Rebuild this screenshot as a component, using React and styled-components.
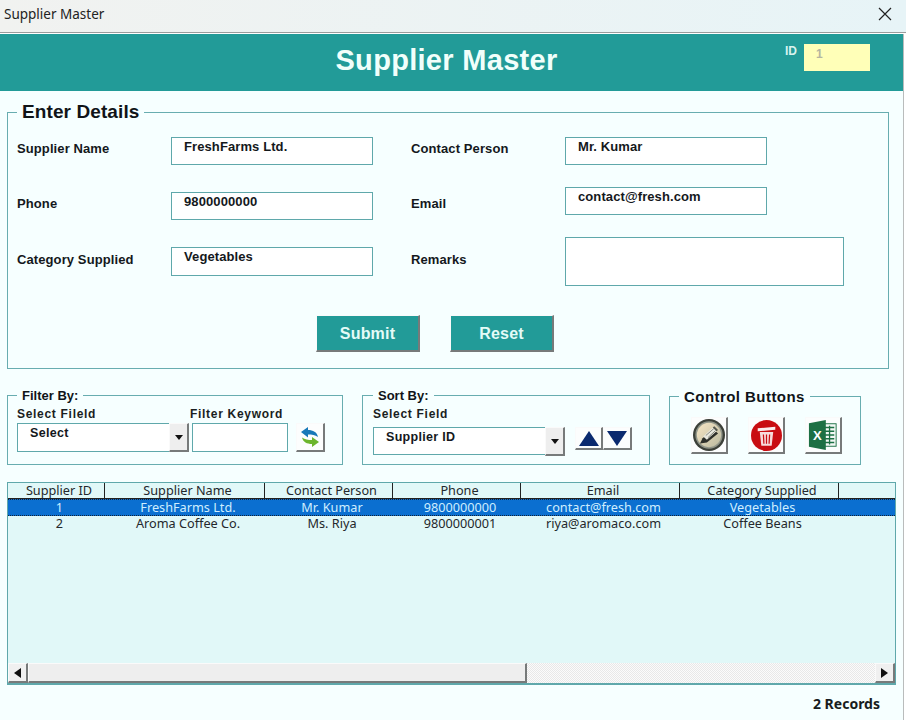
import React from "react";
import styled, { createGlobalStyle, css } from "styled-components";

const GlobalStyle = createGlobalStyle`
  html, body {
    margin: 0;
    background: #ffffff;
  }
  * {
    box-sizing: border-box;
  }
`;

const ui = `"Liberation Sans", Arial, sans-serif`;
const grid = `"Noto Sans", "Open Sans", sans-serif`;

const bevel = css`
  border-style: solid;
  border-width: 1px 2px 2px 1px;
  border-color: #fafafa #777a7a #777a7a #fafafa;
`;

const Page = styled.div`
  width: 906px;
  height: 720px;
  overflow: hidden;
`;

const TitleBar = styled.div`
  height: 33px;
  padding: 0 14px 5px 4px;
  display: flex;
  align-items: center;
  justify-content: space-between;
  background: linear-gradient(90deg, #f1f2f0, #e7f4f7);
  border-bottom: 1px solid #9a9c9c;
  font: 13.5px ${grid};
  color: #222;
`;

const Main = styled.div`
  width: 904px;
  height: 687px;
  background: #f6ffff;
  border-right: 1px solid #b9bcbc;
`;

const Banner = styled.div`
  height: 57px;
  margin-top: 1px;
  width: 903px;
  background: #229b98;
  display: grid;
  grid-template-columns: 1fr auto 1fr;
  align-items: center;
`;

const BannerTitle = styled.h1`
  grid-column: 2;
  margin: 0 10px 4px 0;
  font: bold 29px ${ui};
  letter-spacing: 0.3px;
  color: #f1fffb;
`;

const IdBox = styled.div`
  justify-self: end;
  align-self: start;
  margin: 10px 33px 0 0;
  display: flex;
  gap: 7px;
`;

const IdLabel = styled.span`
  font: bold 12px ${ui};
  color: #d8f3ef;
`;

const IdValue = styled.div`
  width: 66px;
  height: 27px;
  padding: 3px 12px;
  background: #ffffb8;
  font: bold 12px ${ui};
  color: #b5b5a0;
`;

const Box = styled.fieldset`
  margin: 0;
  padding: 0;
  min-width: 0;
  width: ${(p) => p.$w}px;
  height: ${(p) => p.$h}px;
  border: 1px solid #68adb0;
`;

const BoxTitle = styled.legend`
  margin-left: ${(p) => p.$left || 9}px;
  padding: 0 5px;
  font: bold ${(p) => p.$size || 13}px ${ui};
  letter-spacing: ${(p) => p.$spacing || 0}px;
  color: #101418;
`;

const DetailsBox = styled(Box)`
  margin: 10px 0 0 7px;
`;

const FormGrid = styled.div`
  display: grid;
  grid-template-columns: 154px 240px 154px 1fr;
  grid-template-rows: 50px 50px auto;
  padding: 14px 0 0 9px;
`;

const FieldLabel = styled.label`
  margin-top: ${(p) => p.$top}px;
  font: bold 13px ${ui};
  letter-spacing: 0.1px;
  color: #14181c;
`;

const TextField = styled.div`
  width: ${(p) => p.$w || 202}px;
  height: ${(p) => p.$h || 28}px;
  margin-top: ${(p) => p.$top || 0}px;
  padding: 1px 12px;
  background: #ffffff;
  border: 1px solid #5fa8ab;
  font: bold 13px ${ui};
  letter-spacing: 0.1px;
  color: #14181c;
`;

const Actions = styled.div`
  margin-top: 29px;
  display: flex;
  justify-content: center;
  gap: 30px;
  padding-right: 26px;
`;

const TealButton = styled.button`
  width: 104px;
  height: 37px;
  padding: 2px 0 0;
  background: #229b98;
  ${bevel}
  font: bold 16px ${ui};
  letter-spacing: 0.2px;
  color: #e4fbf7;
`;

const ToolRow = styled.div`
  display: flex;
  margin: 19px 0 0 7px;
`;

const FilterBox = styled(Box)`
  margin-right: ${(p) => p.$gap}px;
`;

const ToolBody = styled.div`
  padding: 4px 0 0 ${(p) => p.$pad || 9}px;
`;

const Captions = styled.div`
  display: flex;
  font: bold 12px ${ui};
  letter-spacing: 0.7px;
  color: #1a1e22;
`;

const Caption = styled.span`
  width: ${(p) => p.$w}px;
`;

const Controls = styled.div`
  display: flex;
  align-items: flex-start;
  margin-top: ${(p) => p.$top || 2}px;
`;

const Combo = styled.div`
  width: ${(p) => p.$w}px;
  height: ${(p) => p.$h || 29}px;
  display: flex;
  justify-content: space-between;
  background: #ffffff;
  border: 1px solid #5fa8ab;
  border-right: 0;
  padding-left: 12px;
  font: bold 12.5px ${ui};
  letter-spacing: 0.3px;
  color: #14181c;
`;

const ComboText = styled.span`
  padding-top: 2px;
`;

const SmallButton = styled.div`
  display: flex;
  align-items: center;
  justify-content: center;
  flex: none;
  width: ${(p) => p.$w}px;
  height: ${(p) => p.$h}px;
  margin-left: ${(p) => p.$left || 0}px;
  background: ${(p) => p.$bg || "#fcfdfd"};
  ${bevel}
`;

const ComboButton = styled(SmallButton)`
  margin: -1px 0 -1px 0;
  width: 20px;
  height: 29px;
  background: #eeeeee;
`;

const KeywordField = styled(TextField)`
  margin-left: 3px;
`;

const IconRow = styled.div`
  display: flex;
  gap: 20px;
  padding: 12px 0 0 21px;
`;

const TableBox = styled.div`
  width: 889px;
  height: 203px;
  margin: 17px 0 0 7px;
  display: flex;
  flex-direction: column;
  background: #e1f8f8;
  border: 1px solid #5fa8ab;
  border-bottom-width: 2px;
  font: 12.7px/15px ${grid};
  color: #24282c;
`;

const Row = styled.div`
  display: grid;
  grid-template-columns: 97px 160px 128px 128px 159px 159px 1fr;
  height: 17px;
  text-align: center;
`;

const HeadRow = styled(Row)`
  height: 16px;
  border-bottom: 1px solid #222;
`;

const HeadCell = styled.div`
  padding-left: 6px;
  border-right: 1px solid #222;
  &:last-child {
    border-right: 0;
  }
`;

const BodyCell = styled.div`
  padding-left: 6px;
`;

const BodyRow = styled(Row)`
  ${(p) =>
    p.$selected &&
    css`
      background: #0b6fd0;
      color: #cfeeff;
      border-top: 1px dotted #10233a;
      border-bottom: 1px dotted #10233a;
    `}
`;

const TableFill = styled.div`
  flex: 1;
`;

const ScrollBar = styled.div`
  height: 20px;
  display: flex;
  background: repeating-conic-gradient(#e8e8e8 0 25%, #fbfbfb 0 50%) 0 0 / 2px 2px;
`;

const ScrollButton = styled(SmallButton)`
  width: 20px;
  height: 20px;
  background: #f0f0f0;
`;

const ScrollThumb = styled.div`
  width: 499px;
  background: #eeeeee;
  ${bevel}
`;

const ScrollGap = styled.div`
  flex: 1;
`;

const Footer = styled.div`
  padding: 9px 23px 0 0;
  text-align: right;
  font: bold 14px ${grid};
  color: #181c20;
`;

const arrows = {
  down: { w: 8, h: 5, points: "0,0 8,0 4,5" },
  left: { w: 7, h: 10, points: "7,0 7,10 0,5" },
  right: { w: 7, h: 10, points: "0,0 0,10 7,5" },
  bigUp: { w: 20, h: 15, points: "10,0 20,15 0,15" },
  bigDown: { w: 20, h: 15, points: "0,0 20,0 10,15" },
};

const Arrow = ({ dir = "down", color = "#111" }) => {
  const { w, h, points } = arrows[dir];
  return (
    <svg width={w} height={h} viewBox={`0 0 ${w} ${h}`}>
      <polygon points={points} fill={color} />
    </svg>
  );
};

const CloseIcon = () => (
  <svg width="14" height="14" viewBox="0 0 14 14">
    <path d="M1 1 L13 13 M13 1 L1 13" stroke="#222" strokeWidth="1.2" />
  </svg>
);

const RefreshIcon = () => (
  <svg width="20" height="22" viewBox="0 0 20 22">
    <path d="M1 6 L8 1 V4 C13 4 17 6 18 11 C15 9 12 8.5 8 8.5 V11.5 Z" fill="#1878b8" />
    <path d="M19 16 L12 21 V18 C7 18 3 16 2 11.5 C5 13.5 8 14 12 14 V11 Z" fill="#6cb52d" />
  </svg>
);

const PencilIcon = () => (
  <svg width="32" height="32" viewBox="0 0 30 30">
    <defs>
      <linearGradient id="pencilFace" x1="0" y1="0" x2="1" y2="1">
        <stop offset="0" stopColor="#f8e6c4" />
        <stop offset="1" stopColor="#b9b9a0" />
      </linearGradient>
    </defs>
    <circle cx="15" cy="15" r="15" fill="#3c4039" />
    <circle cx="15" cy="15" r="12.8" fill="#8f9488" />
    <circle cx="15" cy="15" r="11.4" fill="url(#pencilFace)" />
    <path d="M6.5 23 L9 18 L19 9.5 L23.5 13.5 L13 22 Z" fill="#2e302b" />
    <path d="M9.5 16.5 L18.5 8 L22 11.5 L13 19.5 Z" fill="#e9e8df" />
    <path d="M18.5 8 L20 6.7 L23.5 10.2 L22 11.5 Z" fill="#55584f" />
    <path d="M12 15.5 L19.5 9 M14 17.5 L21 11" stroke="#77796d" strokeWidth="0.8" />
  </svg>
);

const TrashIcon = () => (
  <svg width="31" height="31" viewBox="0 0 30 30">
    <circle cx="15" cy="15" r="15" fill="#c90d12" />
    <path d="M6.5 8 L23.5 6.5 V9.5 L6.5 11 Z" fill="#fbeeee" />
    <path d="M8.5 11.5 H21.5 L20 25 H10 Z" fill="#f7dcdc" />
    <path d="M12 14 L12.5 23 M15 14 V23 M18 14 L17.5 23" stroke="#c90d12" strokeWidth="1.2" />
  </svg>
);

const ExcelIcon = () => (
  <svg width="30" height="30" viewBox="0 0 32 32">
    <rect x="14" y="4" width="16" height="24" fill="#f4f8f5" stroke="#1d7044" strokeWidth="1" />
    <path d="M18 8 H28 M18 12 H28 M18 16 H28 M18 20 H28 M18 24 H28 M23 6 V26" stroke="#1d7044" strokeWidth="1.4" />
    <polygon points="1,3.5 19,0 19,32 1,28.5" fill="#1d7044" />
    <text x="10" y="21" textAnchor="middle" fontFamily="Liberation Sans, sans-serif" fontWeight="bold" fontSize="14" fill="#ffffff">
      X
    </text>
  </svg>
);

const columns = ["Supplier ID", "Supplier Name", "Contact Person", "Phone", "Email", "Category Supplied", ""];

const suppliers = [
  ["1", "FreshFarms Ltd.", "Mr. Kumar", "9800000000", "contact@fresh.com", "Vegetables", ""],
  ["2", "Aroma Coffee Co.", "Ms. Riya", "9800000001", "riya@aromaco.com", "Coffee Beans", ""],
];

const App = () => {
  return (
    <Page>
      <GlobalStyle />
      <TitleBar>
        <span>Supplier Master</span>
        <CloseIcon />
      </TitleBar>
      <Main>
        <Banner>
          <BannerTitle>Supplier Master</BannerTitle>
          <IdBox>
            <IdLabel>ID</IdLabel>
            <IdValue>1</IdValue>
          </IdBox>
        </Banner>

        <DetailsBox $w={882} $h={268}>
          <BoxTitle $size={19} $spacing={0.1}>Enter Details</BoxTitle>
          <FormGrid>
            <FieldLabel $top={4}>Supplier Name</FieldLabel>
            <TextField>FreshFarms Ltd.</TextField>
            <FieldLabel $top={4}>Contact Person</FieldLabel>
            <TextField>Mr. Kumar</TextField>

            <FieldLabel $top={9}>Phone</FieldLabel>
            <TextField $top={5}>9800000000</TextField>
            <FieldLabel $top={9}>Email</FieldLabel>
            <TextField>contact@fresh.com</TextField>

            <FieldLabel $top={15}>Category Supplied</FieldLabel>
            <TextField $top={10} $h={29}>Vegetables</TextField>
            <FieldLabel $top={15}>Remarks</FieldLabel>
            <TextField $w={279} $h={49} />
          </FormGrid>
          <Actions>
            <TealButton>Submit</TealButton>
            <TealButton>Reset</TealButton>
          </Actions>
        </DetailsBox>

        <ToolRow>
          <FilterBox $w={336} $h={77} $gap={19}>
            <BoxTitle>Filter By:</BoxTitle>
            <ToolBody>
              <Captions>
                <Caption $w={173}>Select Fileld</Caption>
                <Caption>Filter Keyword</Caption>
              </Captions>
              <Controls>
                <Combo $w={172}>
                  <ComboText>Select</ComboText>
                  <ComboButton><Arrow /></ComboButton>
                </Combo>
                <KeywordField $w={96} $h={29} />
                <SmallButton $w={29} $h={29} $left={8}><RefreshIcon /></SmallButton>
              </Controls>
            </ToolBody>
          </FilterBox>

          <FilterBox $w={288} $h={77} $gap={19}>
            <BoxTitle $left={10}>Sort By:</BoxTitle>
            <ToolBody $pad={10}>
              <Captions>
                <Caption>Select Field</Caption>
              </Captions>
              <Controls $top={6}>
                <Combo $w={192} $h={28}>
                  <ComboText>Supplier ID</ComboText>
                  <ComboButton><Arrow /></ComboButton>
                </Combo>
                <SmallButton $w={28} $h={23} $left={10}><Arrow dir="bigUp" color="#0b2a6f" /></SmallButton>
                <SmallButton $w={29} $h={23}><Arrow dir="bigDown" color="#0b2a6f" /></SmallButton>
              </Controls>
            </ToolBody>
          </FilterBox>

          <FilterBox $w={192} $h={77} $gap={0}>
            <BoxTitle $size={15} $spacing={0.45}>Control Buttons</BoxTitle>
            <IconRow>
              <SmallButton $w={37} $h={37}><PencilIcon /></SmallButton>
              <SmallButton $w={37} $h={37}><TrashIcon /></SmallButton>
              <SmallButton $w={37} $h={37}><ExcelIcon /></SmallButton>
            </IconRow>
          </FilterBox>
        </ToolRow>

        <TableBox>
          <HeadRow>
            {columns.map((col, i) => (
              <HeadCell key={i}>{col}</HeadCell>
            ))}
          </HeadRow>
          {suppliers.map((row, i) => (
            <BodyRow key={row[0]} $selected={i === 0}>
              {row.map((cell, j) => (
                <BodyCell key={j}>{cell}</BodyCell>
              ))}
            </BodyRow>
          ))}
          <TableFill />
          <ScrollBar>
            <ScrollButton><Arrow dir="left" /></ScrollButton>
            <ScrollThumb />
            <ScrollGap />
            <ScrollButton><Arrow dir="right" /></ScrollButton>
          </ScrollBar>
        </TableBox>

        <Footer>2 Records</Footer>
      </Main>
    </Page>
  );
};

export default App;
